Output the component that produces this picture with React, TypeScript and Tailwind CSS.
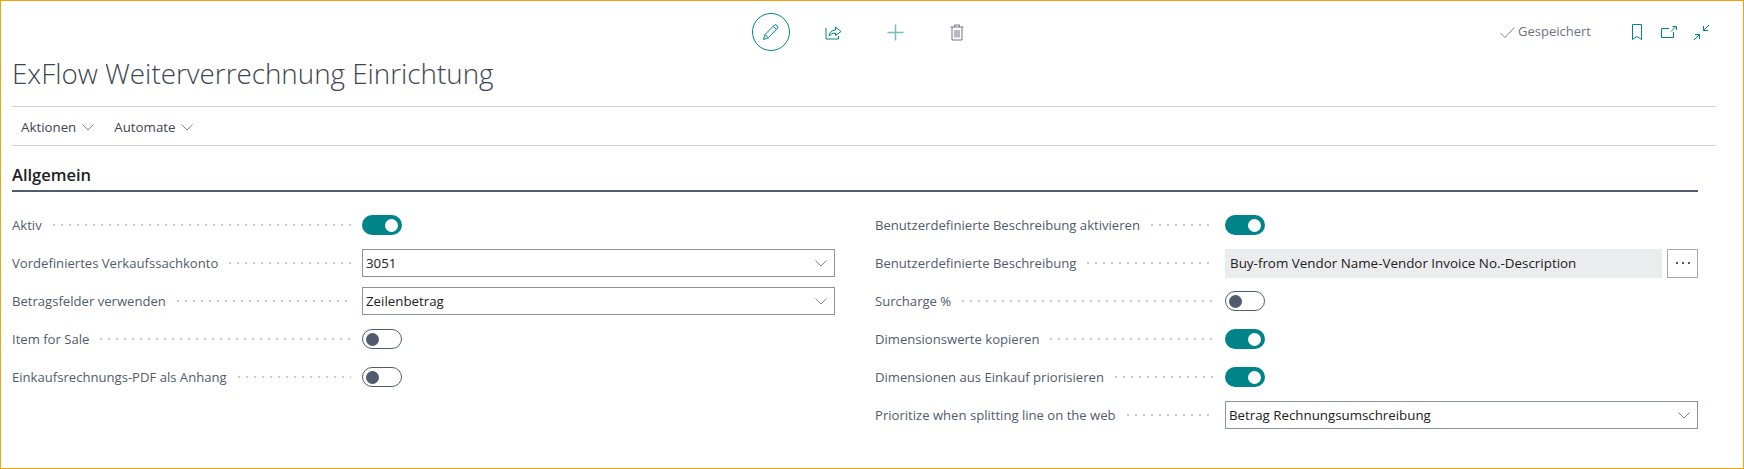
const FONT = "font-['Open_Sans',sans-serif]";

function Chevron({ className = "" }: { className?: string }) {
  return (
    <svg width="12" height="7" viewBox="0 0 12 7" fill="none" className={className}>
      <path d="M0.5 0.5 L6 6 L11.5 0.5" stroke="#7f8793" strokeWidth="1" />
    </svg>
  );
}

function Toggle({ on }: { on: boolean }) {
  if (on) {
    return (
      <div className="w-[40px] h-[20px] rounded-full bg-[#008489] flex items-center justify-end pr-[4px]">
        <div className="w-[13px] h-[13px] rounded-full bg-white" />
      </div>
    );
  }
  return (
    <div className="w-[40px] h-[20px] rounded-full border border-[#505c6d] bg-white flex items-center pl-[3px]">
      <div className="w-[13px] h-[13px] rounded-full bg-[#505c6d]" />
    </div>
  );
}

function Select({ value }: { value: string }) {
  return (
    <div className="w-[473px] h-[28px] border border-[#8d929b] flex items-center justify-between pl-[3px] pr-[7px] text-[13.3px] text-[#212121]">
      <span className="pt-[1px]">{value}</span>
      <Chevron />
    </div>
  );
}

function Row({ label, children }: { label: string; children: React.ReactNode }) {
  return (
    <div className="h-[38px] flex items-center">
      <div className="w-[339px] flex items-center gap-[8px] shrink-0">
        <span className="pt-[1px] text-[13.1px] text-[#505c6d] whitespace-nowrap">{label}</span>
        <div className="flex-1 h-[2px] bg-[radial-gradient(circle,#c8ccd0_1px,transparent_1px)] bg-[length:8px_2px]" />
      </div>
      <div className="ml-[11px]">{children}</div>
    </div>
  );
}

export default function App() {
  return (
    <div className={`w-[1744px] h-[469px] border border-[#f0a30a] bg-white overflow-hidden pl-[11px] ${FONT}`}>
      {/* top action bar */}
      <div className="h-[50px] flex items-center pt-[12px]">
        <div className="ml-[740px] flex items-center gap-[24px]">
          <div className="w-[38px] h-[38px] rounded-full border border-[#008489] flex items-center justify-center">
            <svg width="18" height="18" viewBox="0 0 18 18" fill="none" stroke="#008489" strokeWidth="1">
              <path d="M1.5 16.5 L3 11.5 L12.5 2 Q13.5 1.2 15 2.5 Q16.5 4 15.8 5 L6.3 14.7 Z M3 11.5 L6.3 14.7 M11.2 3.4 L14.5 6.5" />
            </svg>
          </div>
          <div className="w-[38px] flex justify-center">
            <svg width="17" height="15" viewBox="0 0 17 15" fill="none" stroke="#008489" strokeWidth="1">
              <path d="M1 3 V14 H13.5 V11" />
              <path d="M4 11 Q4.5 5.5 10.5 5 V2 L16 6.5 L10.5 10.5 V8 Q6.5 7.8 4 11 Z" />
            </svg>
          </div>
          <div className="w-[38px] flex justify-center">
            <svg width="17" height="17" viewBox="0 0 17 17" stroke="#76bcbf" strokeWidth="1.5">
              <path d="M8.5 0.5 V16.5 M0.5 8.5 H16.5" />
            </svg>
          </div>
          <div className="w-[38px] flex justify-center">
            <svg width="14" height="17" viewBox="0 0 14 17" fill="none" stroke="#6e7683" strokeWidth="1">
              <path d="M0.5 3 H13.5 M4.5 3 V1 H9.5 V3 M2 3 V16 H12 V3 M5 6 V13.5 M7 6 V13.5 M9 6 V13.5" />
            </svg>
          </div>
        </div>
        <div className="ml-auto mr-[33px] flex items-center">
          <svg width="15" height="11" viewBox="0 0 15 11" fill="none" stroke="#7f8793" strokeWidth="1" className="mr-[3px]">
            <path d="M0.5 6 L5 10.5 L14.5 0.5" />
          </svg>
          <span className="text-[13px] text-[#6b7482]">Gespeichert</span>
          <svg width="10" height="16" viewBox="0 0 10 16" fill="none" stroke="#008489" strokeWidth="1" className="ml-[41px]">
            <path d="M0.5 15.5 V0.5 H9.5 V15.5 L5 12.5 Z" />
          </svg>
          <svg width="16" height="12" viewBox="0 0 16 12" fill="none" stroke="#008489" strokeWidth="1" className="ml-[19px]">
            <path d="M8 2.5 H0.5 V11.5 H12.5 V6 M10 5.5 L15 0.5 M11.5 0.5 H15.5 V4" />
          </svg>
          <svg width="17" height="17" viewBox="0 0 17 17" fill="none" stroke="#008489" strokeWidth="1" className="ml-[16px]">
            <path d="M16 1 L10.5 6.5 M10.5 2 V6.5 H15 M1 16 L6.5 10.5 M2 10.5 H6.5 V15" />
          </svg>
        </div>
      </div>

      {/* page title */}
      <h1 className="h-[55px] pt-[3px] text-[27.8px] font-light leading-[38px] text-[#3d4652]">ExFlow Weiterverrechnung Einrichtung</h1>

      {/* action menu */}
      <div className="w-[1704px] h-[40px] border-y border-[#d0d0d6] flex items-center pt-[3px] pl-[9px] gap-[20px] text-[13.3px] text-[#3d4652]">
        <div className="flex items-center gap-[6px]">
          <span>Aktionen</span>
          <Chevron />
        </div>
        <div className="flex items-center gap-[6px]">
          <span>Automate</span>
          <Chevron />
        </div>
      </div>

      {/* section */}
      <div className="w-[1686px]">
        <div className="h-[46px] border-b-2 border-[#505c6d] flex items-end pb-[2px] text-[16.5px] font-semibold text-[#212121]">
          Allgemein
        </div>
        <div className="grid grid-cols-2 gap-[40px] pt-[14px]">
          <div>
            <Row label="Aktiv"><Toggle on /></Row>
            <Row label="Vordefiniertes Verkaufssachkonto"><Select value="3051" /></Row>
            <Row label="Betragsfelder verwenden"><Select value="Zeilenbetrag" /></Row>
            <Row label="Item for Sale"><Toggle on={false} /></Row>
            <Row label="Einkaufsrechnungs-PDF als Anhang"><Toggle on={false} /></Row>
          </div>
          <div>
            <Row label="Benutzerdefinierte Beschreibung aktivieren"><Toggle on /></Row>
            <Row label="Benutzerdefinierte Beschreibung">
              <div className="flex items-center gap-[5px]">
                <div className="w-[437px] h-[29px] bg-[#ebecee] flex items-center pl-[5px] pt-[1px] text-[13.4px] text-[#212121]">
                  Buy-from Vendor Name-Vendor Invoice No.-Description
                </div>
                <div className="w-[31px] h-[29px] border border-[#a8a8a8] flex items-center justify-center gap-[4px]">
                  <span className="w-[2px] h-[2px] bg-[#505c6d]" />
                  <span className="w-[2px] h-[2px] bg-[#505c6d]" />
                  <span className="w-[2px] h-[2px] bg-[#505c6d]" />
                </div>
              </div>
            </Row>
            <Row label="Surcharge %"><Toggle on={false} /></Row>
            <Row label="Dimensionswerte kopieren"><Toggle on /></Row>
            <Row label="Dimensionen aus Einkauf priorisieren"><Toggle on /></Row>
            <Row label="Prioritize when splitting line on the web"><Select value="Betrag Rechnungsumschreibung" /></Row>
          </div>
        </div>
      </div>
    </div>
  );
}
